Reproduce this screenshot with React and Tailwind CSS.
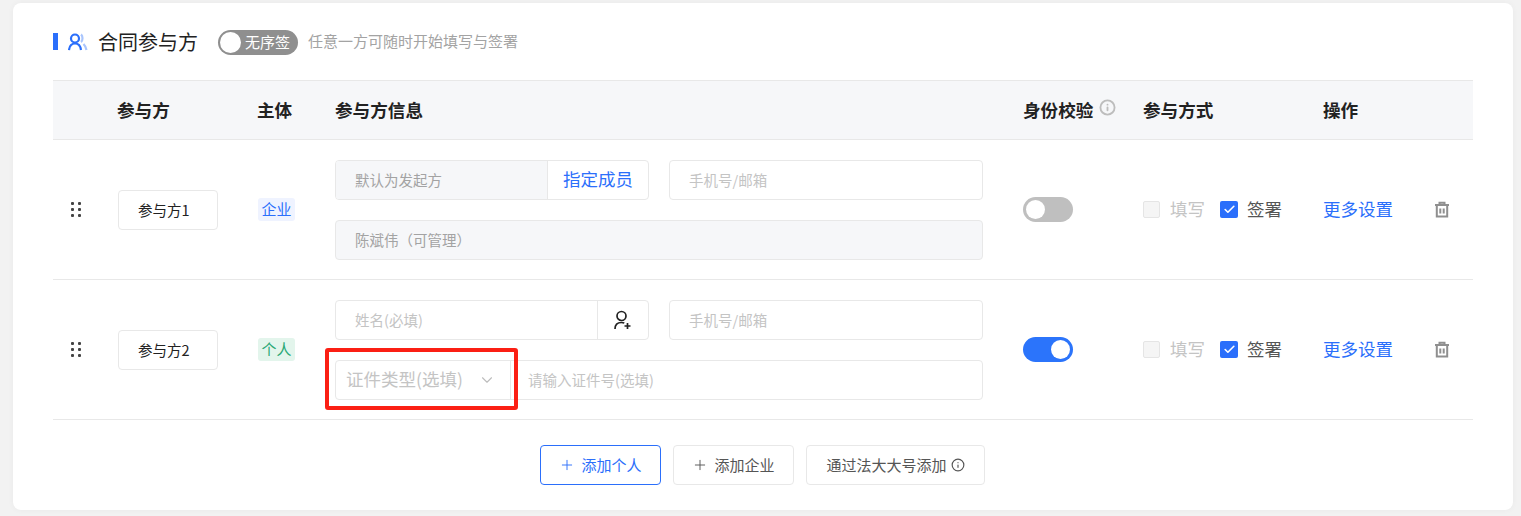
import { ChevronDown, Plus, Info, Check } from "lucide-react";

const Handle = () => (
  <div className="grid grid-cols-2 gap-x-[4px] gap-y-[3px] w-[10px] ml-[18px]">
    {[0, 1, 2, 3, 4, 5].map((i) => (
      <span key={i} className="w-[3px] h-[3px] bg-[#444] rounded-[1px]" />
    ))}
  </div>
);

const Trash = () => (
  <svg width="16" height="17" viewBox="0 0 16 17" fill="none" stroke="#8f8f8f" strokeWidth="2">
    <path d="M1 4h14M5.5 4V1.8h5V4M2.8 4v11.5h10.4V4M6.3 7.5v5M9.7 7.5v5" />
  </svg>
);

const Toggle = ({ on }) => (
  <div className={`w-[50px] h-[25px] rounded-full p-[3px] flex ${on ? "bg-[#2b74fb] justify-end" : "bg-[#bfbfbf]"}`}>
    <span className="w-[19px] h-[19px] rounded-full bg-white" />
  </div>
);

const Ways = () => (
  <div className="flex items-center">
    <span className="w-[17px] h-[17px] rounded-[2px] border border-[#e5e5e5] bg-[#f5f5f5]" />
    <span className="ml-[10px] text-[17.5px] text-[#c4c4c4]">填写</span>
    <span className="ml-[15px] w-[18px] h-[17px] rounded-[2px] bg-[#2b6ffb] flex items-center justify-center">
      <Check size={13} color="#fff" strokeWidth={3} />
    </span>
    <span className="ml-[9px] text-[17.5px] text-[#555]">签署</span>
  </div>
);

const Row = ({ name, tag, tagClass, on, children }) => (
  <div className="grid grid-cols-[64px_140px_78px_688px_120px_180px_1fr] h-[140px] border-b border-[#e8e8e8] items-center">
    <Handle />
    <div className="ml-px w-[100px] h-[40px] border border-[#e8e8e8] rounded-[4px] flex items-center pl-[19px] text-[14.5px] text-[#222]">
      {name}
    </div>
    <span className={`w-[37px] h-[23px] ml-px rounded-[3px] flex items-center justify-center text-[15px] ${tagClass}`}>
      {tag}
    </span>
    <div className="relative flex flex-col gap-[20px] w-[648px]">{children}</div>
    <Toggle on={on} />
    <Ways />
    <div className="flex items-center">
      <span className="text-[17.5px] text-[#2b6ffb]">更多设置</span>
      <span className="ml-[41px]">
        <Trash />
      </span>
    </div>
  </div>
);

const Field = ({ className, children }) => (
  <div className={`h-[40px] flex items-center border border-[#e8e8e8] rounded-[4px] text-[14.5px] ${className}`}>
    {children}
  </div>
);

export default function App() {
  return (
    <div
      className="h-[516px] bg-[#f2f2f2] pt-[3px] pl-[13px] pr-[8px] overflow-hidden"
      style={{ fontFamily: '"Noto Sans CJK SC", "Noto Sans", sans-serif' }}
    >
      <div className="h-[507px] bg-white rounded-lg shadow-[0_0_6px_rgba(0,0,0,0.04)] px-[40px]">
        <div className="h-[77px] flex items-center">
          <span className="w-[5px] h-[17px] bg-[#2b6ffb]" />
          <svg className="ml-[10px]" width="20" height="18" viewBox="0 0 20 18" fill="none" strokeWidth="2.2">
            <circle cx="7" cy="5.5" r="4" stroke="#2b6ffb" />
            <path d="M1 17c.5-4 3-6.5 6-6.5s5.5 2.5 6 6.5" stroke="#2b6ffb" />
            <path d="M13 1.5c2 1.5 2 6 0 7.5M15.5 11c1.5 1.5 2.5 3.5 3 6" stroke="#a9c5fd" />
          </svg>
          <span className="ml-[10px] w-[100px] text-[20px] text-[#222]">合同参与方</span>
          <div className="ml-[20px] mt-px w-[80px] h-[25px] rounded-full bg-[#8f8f8f] flex items-center pl-[2px]">
            <span className="w-[21px] h-[21px] rounded-full bg-white" />
            <span className="ml-[4px] text-[15px] text-white">无序签</span>
          </div>
          <span className="ml-[10px] text-[15px] text-[#a3a3a3]">任意一方可随时开始填写与签署</span>
        </div>

        <div className="grid grid-cols-[64px_140px_78px_688px_120px_180px_1fr] h-[60px] items-center bg-[#f6f7f9] border-y border-[#e8e8e8] text-[17.6px] font-bold text-[#222]">
          <span />
          <span>参与方</span>
          <span>主体</span>
          <span>参与方信息</span>
          <span className="flex items-center gap-[6px]">
            身份校验
            <Info size={17} color="#bdbdbd" strokeWidth={2.6} className="-mt-1" />
          </span>
          <span>参与方式</span>
          <span>操作</span>
        </div>

        <Row name="参与方1" tag="企业" tagClass="bg-[#eff3ff] text-[#2b6ffb]">
          <div className="flex gap-[20px]">
            <Field className="w-[314px] overflow-hidden">
              <span className="flex-1 h-full flex items-center pl-[19px] bg-[#f6f7f9] text-[#a3a3a3]">默认为发起方</span>
              <span className="w-[101px] h-full flex items-center justify-center border-l border-[#e8e8e8] text-[17.5px] text-[#2b6ffb]">
                指定成员
              </span>
            </Field>
            <Field className="w-[314px] pl-[19px] text-[#c4c4c4]">手机号/邮箱</Field>
          </div>
          <Field className="bg-[#f6f7f9] pl-[19px] text-[#a3a3a3]">陈斌伟（可管理）</Field>
        </Row>

        <Row name="参与方2" tag="个人" tagClass="bg-[#e3f5ec] text-[#2aa876]" on>
          <div className="flex gap-[20px]">
            <Field className="w-[314px]">
              <span className="flex-1 pl-[19px] text-[#c4c4c4]">姓名(必填)</span>
              <span className="w-[51px] h-full flex items-center justify-center border-l border-[#e8e8e8]">
                <svg width="18" height="20" viewBox="0 0 18 20" fill="none" stroke="#222" strokeWidth="1.7">
                  <circle cx="7.5" cy="6" r="4.5" />
                  <path d="M1 19c0-4 2.5-6.5 6.5-6.5 1 0 2 .2 2.8.5M13.5 13v6M10.5 16h6" />
                </svg>
              </span>
            </Field>
            <Field className="w-[314px] pl-[19px] text-[#c4c4c4]">手机号/邮箱</Field>
          </div>
          <Field>
            <span className="w-[175px] h-full flex items-center justify-between pl-[10px] pr-[14px] border-r border-[#e8e8e8] text-[17.5px] text-[#c4c4c4]">
              证件类型(选填)
              <ChevronDown size={18} color="#bdbdbd" strokeWidth={1.5} />
            </span>
            <span className="pl-[17px] text-[#c4c4c4]">请输入证件号(选填)</span>
          </Field>
          <div className="absolute left-[-10px] top-[48px] w-[193px] h-[62px] border-4 border-[#fb1f14] rounded-[3px]" />
        </Row>

        <div className="flex justify-center gap-[12px] pt-[25px] pr-px text-[15px]">
          <button className="w-[121px] h-[40px] flex items-center justify-center gap-[6px] border border-[#2b6ffb] rounded-[4px] text-[#2b6ffb]">
            <Plus size={16} strokeWidth={1.4} />
            添加个人
          </button>
          <button className="w-[121px] h-[40px] flex items-center justify-center gap-[6px] border border-[#e8e8e8] rounded-[4px] text-[#555]">
            <Plus size={16} strokeWidth={1.4} />
            添加企业
          </button>
          <button className="w-[179px] h-[40px] flex items-center justify-center gap-[4px] border border-[#e8e8e8] rounded-[4px] text-[#555]">
            通过法大大号添加
            <Info size={14} />
          </button>
        </div>
      </div>
    </div>
  );
}
